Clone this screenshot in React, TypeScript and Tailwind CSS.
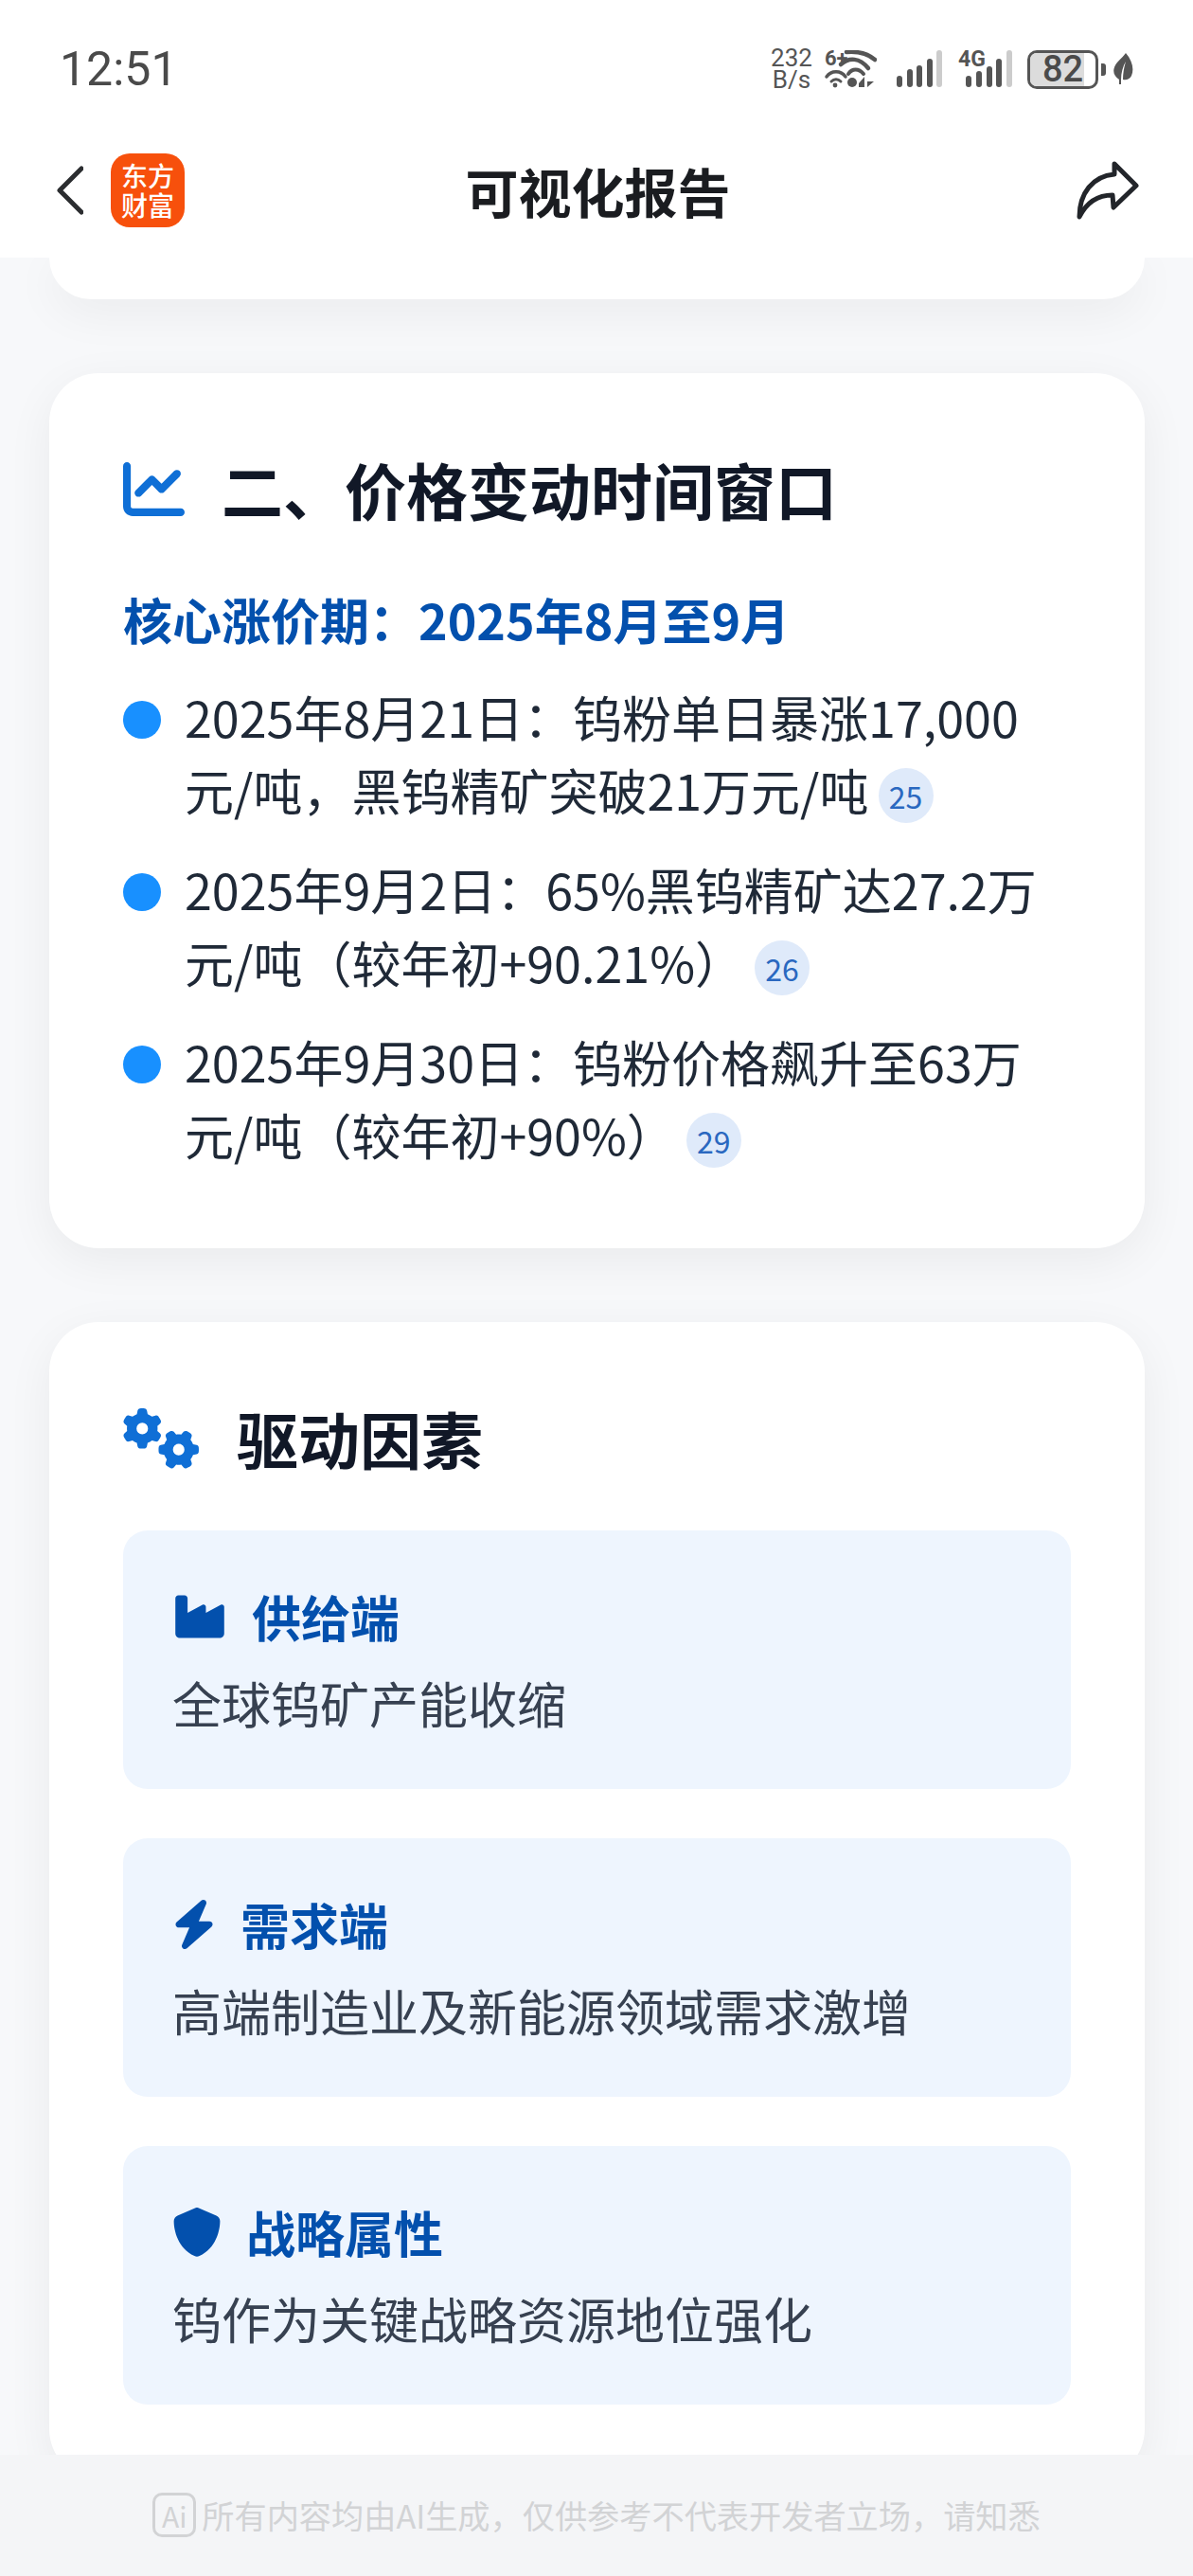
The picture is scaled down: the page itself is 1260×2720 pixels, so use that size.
import { FaBolt, FaChartLine, FaGears, FaIndustry, FaShield } from "react-icons/fa6";
import type { ReactNode } from "react";

function SignalBars() {
  return (
    <svg width="49" height="40" viewBox="0 0 49 40">
      <rect x="0" y="27" width="6" height="12" rx="3" fill="#555" />
      <rect x="11" y="20" width="6" height="19" rx="3" fill="#555" />
      <rect x="21" y="16" width="6" height="23" rx="3" fill="#555" />
      <rect x="32" y="9" width="6" height="30" rx="3" fill="#555" />
      <rect x="42" y="0" width="6" height="39" rx="3" fill="#ccc" />
    </svg>
  );
}

function WifiIcon() {
  return (
    <div className="relative w-[56px] h-[40px]">
      <span className="absolute left-[1px] top-[-2px] font-['Roboto',sans-serif] font-bold text-[22px] leading-[22px] text-[#555]">6+</span>
      <svg width="56" height="40" viewBox="0 0 56 40" fill="none" stroke="#555" strokeLinecap="round">
        <path d="M24 2C36 1 47 4 54 10" strokeWidth="4.5" />
        <path d="M18 15C27 7 38 8 47 19" strokeWidth="4.5" />
        <path d="M26 25C30 19 37 19 42 25" strokeWidth="4" />
        <path d="M3 28C8 21 18 21 23 28" strokeWidth="3.5" />
        <path d="M8 33C11 30 15 30 18 33" strokeWidth="3" />
        <circle cx="12" cy="37" r="2.4" fill="#555" stroke="none" />
        <circle cx="30" cy="34" r="5" fill="#555" stroke="none" />
        <path d="M37 35L43 28V39H37Z" fill="#555" stroke="none" />
        <path d="M46 28V39L53 33H46Z" fill="#555" stroke="none" />
      </svg>
    </div>
  );
}

function StatusBar() {
  return (
    <div className="h-[130px] pt-[16px] pl-[63px] pr-[63px] flex items-center justify-between bg-white">
      <span className="font-['Roboto',sans-serif] text-[50px] leading-none text-[#4a4a4a]">12:51</span>
      <div className="flex items-center">
        <div className="flex flex-col items-center w-[46px] font-['Roboto',sans-serif] text-[26px] leading-[23px] text-[#555] mr-[11px]">
          <span>232</span>
          <span>B/s</span>
        </div>
        <WifiIcon />
        <div className="ml-[21px]">
          <SignalBars />
        </div>
        <div className="relative w-[57px] h-[40px] ml-[16px]">
          <span className="absolute left-0 top-[-1px] font-['Roboto',sans-serif] font-bold text-[23px] leading-[22px] text-[#555]">4G</span>
          <svg width="57" height="40" viewBox="0 0 57 40">
            <rect x="8" y="27" width="6" height="12" rx="3" fill="#555" />
            <rect x="19" y="22" width="6" height="17" rx="3" fill="#555" />
            <rect x="30" y="17" width="6" height="22" rx="3" fill="#555" />
            <rect x="40" y="9" width="6" height="30" rx="3" fill="#555" />
            <rect x="51" y="0" width="6" height="39" rx="3" fill="#ccc" />
          </svg>
        </div>
        <div className="relative w-[75px] h-[41px] ml-[16px] rounded-[10px] border-[3px] border-[#555] overflow-hidden flex items-center justify-center">
          <div className="absolute left-0 top-0 bottom-0 w-[82%] bg-[#dcdcdc]" />
          <span className="relative font-['Roboto',sans-serif] font-medium text-[38px] leading-none text-[#4a4a4a]">82</span>
        </div>
        <div className="w-[5px] h-[13px] rounded-r-[3px] bg-[#555] ml-[3px]" />
        <svg className="ml-[7px]" width="22" height="34" viewBox="0 0 22 34">
          <path d="M14 0C21 8 23 17 20 24C18 28 14 29 11 28C11 22 12 15 14 9C11 14 9 21 9 28V33H7V28C2 25 0 20 2 15C4 9 10 6 14 0Z" fill="#555" />
        </svg>
      </div>
    </div>
  );
}

function Header() {
  return (
    <div className="h-[142px] pl-[60px] pr-[57px] grid grid-cols-[1fr_auto_1fr] items-center bg-white">
      <div className="flex items-center gap-[29px]">
        <svg width="28" height="52" viewBox="0 0 28 52" fill="none" stroke="#2b2d30" strokeWidth="5" strokeLinecap="round" strokeLinejoin="round">
          <path d="M26 3L3 26L26 49" />
        </svg>
        <div className="w-[78px] h-[78px] rounded-[20px] bg-[#f7500c] flex flex-col items-center justify-center text-white font-medium text-[28px] leading-[31px]">
          <span>东方</span>
          <span>财富</span>
        </div>
      </div>
      <h1 className="text-center text-[56px] font-bold leading-none text-[#1a1c20]">可视化报告</h1>
      <svg className="justify-self-end" width="66" height="64" viewBox="0 0 66 64" fill="none" stroke="#22252a" strokeWidth="5" strokeLinejoin="round">
        <path d="M40 4L63 27L39 50L38 37C22 37 10 46 3 60C3 35 17 17 40 15Z" />
      </svg>
    </div>
  );
}

function Badge({ n, className }: { n: number; className: string }) {
  return (
    <span className={`inline-flex items-center justify-center w-[58px] h-[58px] rounded-full bg-[#dfeafa] text-[#2a68c0] text-[32px] leading-none align-middle -translate-y-[2px] ${className}`}>
      {n}
    </span>
  );
}

function PriceItem({ children }: { children: ReactNode }) {
  return (
    <li className="flex items-start text-[52px] leading-[77px] text-[#1f2937]">
      <div className="w-[40px] h-[40px] mt-[22px] mr-[25px] rounded-full bg-[#1890ff] shrink-0" />
      <div className="flex-1">{children}</div>
    </li>
  );
}

function FactorCard({ icon, title, desc }: { icon: ReactNode; title: string; desc: string }) {
  return (
    <div className="rounded-[26px] bg-[#eef5fe] p-[52px]">
      <div className="flex items-center gap-[26px] text-[52px] leading-[78px] font-bold text-[#0350ad]">
        {icon}
        <span>{title}</span>
      </div>
      <p className="mt-[13px] text-[52px] leading-[78px] text-[#374151]">{desc}</p>
    </div>
  );
}

export default function App() {
  return (
    <div className="w-[1260px] h-[2720px] flex flex-col overflow-hidden bg-[#f7f8fa] font-['Noto_Sans_CJK_SC','Noto_Sans',sans-serif]">
      <StatusBar />
      <Header />

      <main className="flex-1 overflow-hidden pl-[52px] pr-[51px]">
        <div className="h-[44px] rounded-b-[52px] bg-white shadow-[0_13px_50px_rgba(0,0,0,0.06)]" />

        <section className="mt-[78px] rounded-[52px] bg-white pt-[74px] px-[78px] pb-[82px] shadow-[0_13px_50px_rgba(0,0,0,0.06)]">
          <div className="flex items-center gap-[39px]">
            <FaChartLine className="text-[#0f6fd6] w-[65px] h-[65px]" />
            <h2 className="text-[65px] leading-[97px] font-bold text-[#111827]">二、价格变动时间窗口</h2>
          </div>
          <p className="mt-[50px] text-[52px] leading-[78px] font-bold text-[#0350ad]">核心涨价期：2025年8月至9月</p>
          <ul className="mt-[25px] flex flex-col gap-[28px]">
            <PriceItem>
              2025年8月21日：钨粉单日暴涨17,000
              <br />
              元/吨，黑钨精矿突破21万元/吨
              <Badge n={25} className="ml-[10px]" />
            </PriceItem>
            <PriceItem>
              2025年9月2日：65%黑钨精矿达27.2万
              <br />
              元/吨（较年初+90.21%）
              <Badge n={26} className="ml-[11px]" />
            </PriceItem>
            <PriceItem>
              2025年9月30日：钨粉价格飙升至63万
              <br />
              元/吨（较年初+90%）
              <Badge n={29} className="ml-[11px]" />
            </PriceItem>
          </ul>
        </section>

        <section className="mt-[78px] rounded-[52px] bg-white pt-[74px] px-[78px] pb-[78px] shadow-[0_13px_50px_rgba(0,0,0,0.06)]">
          <div className="flex items-center gap-[39px]">
            <FaGears className="text-[#0f6fd6] w-[81px] h-[65px]" />
            <h2 className="text-[65px] leading-[97px] font-bold text-[#111827]">驱动因素</h2>
          </div>
          <div className="mt-[49px] flex flex-col gap-[52px]">
            <FactorCard icon={<FaIndustry className="w-[58px] h-[52px]" />} title="供给端" desc="全球钨矿产能收缩" />
            <FactorCard icon={<FaBolt className="w-[46px] h-[52px]" />} title="需求端" desc="高端制造业及新能源领域需求激增" />
            <FactorCard icon={<FaShield className="w-[52px] h-[52px]" />} title="战略属性" desc="钨作为关键战略资源地位强化" />
          </div>
        </section>
      </main>

      <footer className="h-[128px] shrink-0 bg-[#f4f5f7] flex items-start justify-center pt-[40px] gap-[6px] text-[#d2d3d5]">
        <div className="w-[46px] h-[47px] rounded-[10px] border-[3px] border-[#d2d3d5] flex items-center justify-center text-[30px] leading-none">Ai</div>
        <span className="text-[34.2px] leading-[47px]">所有内容均由AI生成，仅供参考不代表开发者立场，请知悉</span>
      </footer>
    </div>
  );
}
